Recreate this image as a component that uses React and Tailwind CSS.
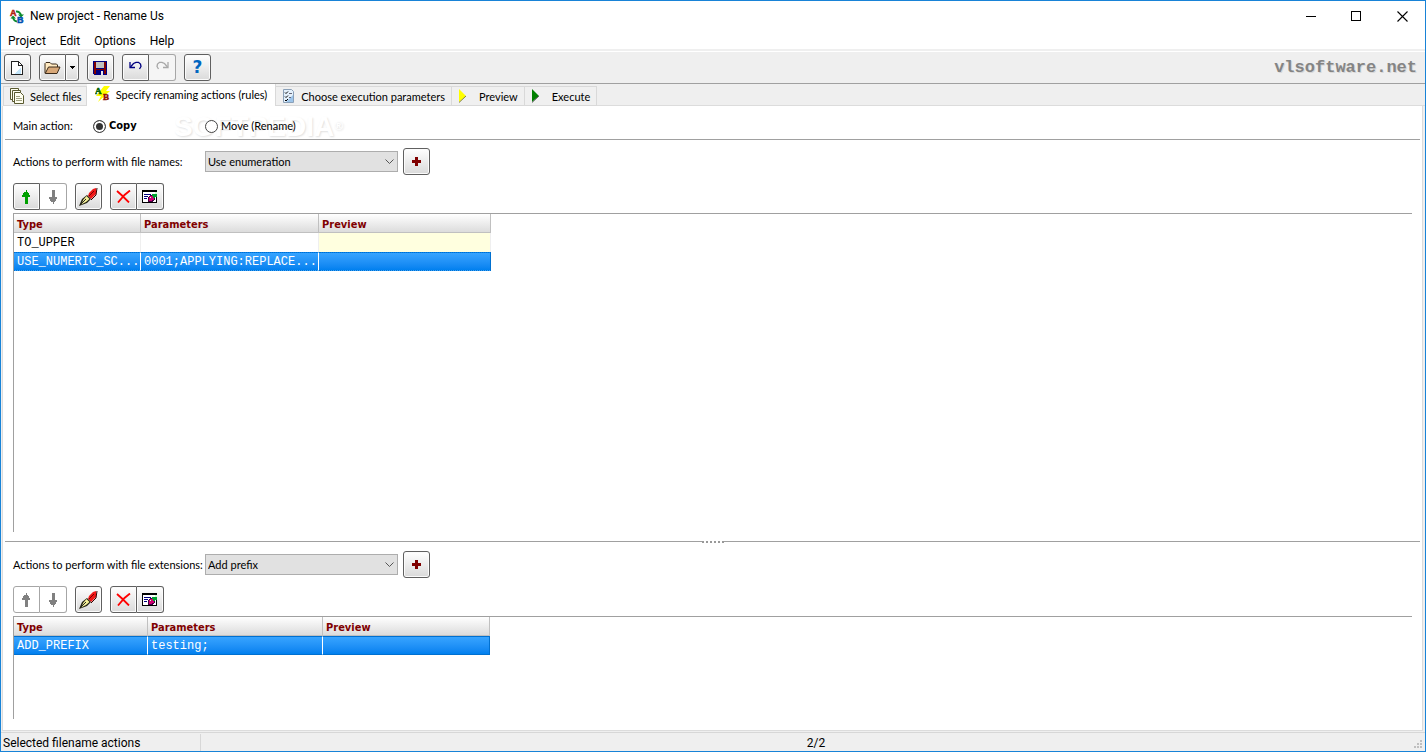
import { useState } from "react";
import clsx from "clsx";

const TAHOMA = "font-[Lato,'Noto_Sans',sans-serif] text-[11px]";
const TAHOMA_BOLD = "font-['DejaVu_Sans_Condensed','DejaVu_Sans',sans-serif] text-[11px] font-bold";
const SEGOE = "font-[Roboto,'Noto_Sans',sans-serif] text-[12px]";
const MONO = "font-['Liberation_Mono','Courier_New',monospace]";

const fileNameRules = [
  { type: "TO_UPPER", params: "", preview: "" },
  { type: "USE_NUMERIC_SC...", params: "0001;APPLYING:REPLACE...", preview: "" },
];

const extensionRules = [{ type: "ADD_PREFIX", params: "testing;", preview: "" }];

const tabs = [
  { id: "files", label: "Select files", icon: FilesIcon, width: "gap-[6px] pl-[6px] pr-[4px]" },
  { id: "rules", label: "Specify renaming actions (rules)", icon: RulesIcon, width: "gap-[6px] px-[8px]" },
  { id: "params", label: "Choose execution parameters", icon: ChecklistIcon, width: "gap-[6px] px-[6px]" },
  { id: "preview", label: "Preview", icon: YellowArrow, width: "gap-[12px] px-[6px]" },
  { id: "execute", label: "Execute", icon: GreenArrow, width: "gap-[12px] pl-[6px] pr-[6px]" },
];

export default function App() {
  const [tab, setTab] = useState("rules");
  const [action, setAction] = useState("copy");

  return (
    <div className="flex h-screen flex-col border border-[#1883d7] bg-[#efefef] text-black">
      <TitleBar />
      <MenuBar />
      <Toolbar />

      <nav role="tablist" className={clsx(TAHOMA, "z-10 flex h-[22px] items-end pl-[2px]")}>
        {tabs.map(({ id, label, icon: Icon, width }) => (
          <button
            key={id}
            role="tab"
            aria-selected={tab === id}
            onClick={() => setTab(id)}
            className={clsx(
              "flex items-center whitespace-nowrap border-r border-[#d9d9d9]",
              width,
              tab === id ? "h-[22px] bg-white pb-[2px]" : "h-[20px] border-y bg-[#f0f0f0]",
              id === "files" && "border-l"
            )}
          >
            <Icon />
            <span className="pt-[2px]">{label}</span>
          </button>
        ))}
        <div className="flex-1 border-b border-[#dcdcdc]" />
      </nav>

      <main className="mb-px ml-px mr-[2px] flex min-h-0 flex-1 flex-col border-x border-b border-[#dcdcdc] bg-white px-[2px]">
        <div
          role="radiogroup"
          aria-label="Main action"
          className={clsx(TAHOMA, "relative flex h-[34px] shrink-0 items-center border-b border-[#a0a0a0] pt-[8px] pl-[8px]")}
        >
          <span
            aria-hidden="true"
            className="absolute left-[169px] top-[6px] font-['Liberation_Sans',sans-serif] text-[28px] leading-[30px] font-bold text-white [text-shadow:1px_1px_2px_#e0e0e0]"
          >
            SOFTPEDIA<sup className="text-[12px]">®</sup>
          </span>
          <span className="w-[80px]">Main action:</span>
          <Radio name="action" checked={action === "copy"} onChange={() => setAction("copy")} className="w-[112px]">
            <b className={TAHOMA_BOLD}>Copy</b>
          </Radio>
          <Radio name="action" checked={action === "move"} onChange={() => setAction("move")}>
            Move (Rename)
          </Radio>
        </div>

        <section className="flex min-h-0 flex-1 flex-col px-[8px] pt-[8px] pb-[9px]">
          <RuleHeader
            id="name-rule"
            label="Actions to perform with file names:"
            options={["Use enumeration", "To upper case", "Add prefix"]}
          />
          <RuleButtons canMoveUp />
          <RuleTable rules={fileNameRules} selected={1} focused cols={["w-[127px]", "w-[178px]", "w-[172px]"]} />
        </section>

        <div className="flex h-px items-center justify-center bg-[#a0a0a0]">
          <span className="h-[3px] w-[22px] border-b-2 border-dotted border-[#999] bg-white" />
        </div>

        <section className="flex h-[188px] shrink-0 flex-col px-[8px] pt-[9px] pb-[11px]">
          <RuleHeader
            id="ext-rule"
            label="Actions to perform with file extensions:"
            options={["Add prefix", "Use enumeration"]}
          />
          <RuleButtons />
          <RuleTable rules={extensionRules} selected={0} cols={["w-[134px]", "w-[175px]", "w-[167px]"]} />
        </section>
      </main>

      <footer className={clsx(SEGOE, "relative flex h-[19px] shrink-0 items-center border-t border-[#d7d7d7]")}>
        <span className="h-[17px] w-[200px] border-r border-[#d7d7d7] pl-[2px] leading-[18px]">
          Selected filename actions
        </span>
        <span className="h-[17px] flex-1 pl-[6px] text-center leading-[18px]">2/2</span>
        <svg width="9" height="9" className="absolute right-[2px] bottom-[2px]" fill="#bfbfbf">
          <path d="M6 0h2v2h-2zM3 3h2v2h-2zM6 3h2v2h-2zM0 6h2v2h-2zM3 6h2v2h-2zM6 6h2v2h-2z" />
        </svg>
      </footer>
    </div>
  );
}

function TitleBar() {
  return (
    <header className={clsx(SEGOE, "flex h-[30px] shrink-0 items-center bg-white pl-[8px]")}>
      <AppIcon />
      <h1 className="ml-[5px] flex-1">New project - Rename Us</h1>
      <button aria-label="Minimize" className="grid h-full w-[45px] place-items-center">
        <svg width="10" height="10" stroke="#000" shapeRendering="crispEdges">
          <path d="M0 5.5h10" />
        </svg>
      </button>
      <button aria-label="Maximize" className="grid h-full w-[46px] place-items-center">
        <svg width="10" height="10" fill="none" stroke="#000" shapeRendering="crispEdges">
          <path d="M.5.5h9v9h-9z" />
        </svg>
      </button>
      <button aria-label="Close" className="grid h-full w-[46px] place-items-center">
        <svg width="11" height="11" stroke="#000" strokeWidth="1.1">
          <path d="M.5.5l10 10M10.5.5l-10 10" />
        </svg>
      </button>
    </header>
  );
}

function MenuBar() {
  return (
    <nav className={clsx(SEGOE, "flex h-[18px] shrink-0 items-center gap-[14px] bg-white pt-[2px] pl-[7px]")}>
      <button>Project</button>
      <button>Edit</button>
      <button>Options</button>
      <button>Help</button>
    </nav>
  );
}

function Toolbar() {
  return (
    <div className="mt-[2px] flex h-[33px] shrink-0 items-start gap-[8px] border-t border-b border-t-white border-b-[#a0a0a0] pt-[2px] pr-[8px] pl-[3px]">
      <ToolButton label="New project">
        <NewIcon />
      </ToolButton>
      <div className="flex">
        <ToolButton label="Open project" side="left">
          <FolderIcon />
        </ToolButton>
        <ToolButton label="Recent projects" side="right" narrow>
          <svg width="5" height="3" shapeRendering="crispEdges">
            <path d="M0 0h5v1h-1v1h-1v1h-1v-1h-1v-1h-1z" />
          </svg>
        </ToolButton>
      </div>
      <ToolButton label="Save project">
        <SaveIcon />
      </ToolButton>
      <div className="flex">
        <ToolButton label="Undo" side="left">
          <UndoIcon color="#000080" />
        </ToolButton>
        <ToolButton label="Redo" side="right" disabled>
          <UndoIcon color="#a8a8a8" flip />
        </ToolButton>
      </div>
      <ToolButton label="Help">
        <span className="font-['DejaVu_Sans',sans-serif] text-[17px] leading-none font-bold text-[#0066c0]">?</span>
      </ToolButton>
      <a
        href="#vlsoftware"
        className={clsx(
          MONO,
          "mt-[4px] ml-auto text-[17px] leading-[20px] font-bold text-[#848484] [text-shadow:1px_1px_0_#d8d8d8]"
        )}
      >
        vlsoftware.net
      </a>
    </div>
  );
}

function ToolButton({ label, side, narrow, disabled, children }) {
  return (
    <button
      aria-label={label}
      disabled={disabled}
      className={clsx(
        "grid h-[27px] shrink-0 place-items-center border",
        narrow ? "w-[13px]" : "w-[27px]",
        side === "left" && "rounded-l-[3px]",
        side === "right" && "rounded-r-[3px] border-l-0",
        !side && "rounded-[3px]",
        disabled
          ? "border-[#a6a6a6] bg-white/40"
          : "border-[#606060] bg-linear-to-b from-white to-[#dadada] shadow-[inset_0_0_0_1px_#fbfbfb]"
      )}
    >
      {children}
    </button>
  );
}

function Radio({ className, children, ...props }) {
  return (
    <label className={clsx("relative flex items-center gap-[3px]", className)}>
      <input
        type="radio"
        className="size-[13px] appearance-none rounded-full border border-[#444] bg-white checked:bg-[#333] checked:shadow-[inset_0_0_0_2px_#fff]"
        {...props}
      />
      {children}
    </label>
  );
}

function RuleHeader({ id, label, options }) {
  return (
    <div className={clsx(TAHOMA, "flex items-center")}>
      <label htmlFor={id} className="w-[192px] pt-[2px] whitespace-nowrap">
        {label}
      </label>
      <div className="relative mr-[5px]">
        <select
          id={id}
          className="block h-[21px] w-[193px] appearance-none border border-[#adadad] bg-[#e1e1e1] pt-[2px] pl-[2px]"
        >
          {options.map((o) => (
            <option key={o}>{o}</option>
          ))}
        </select>
        <svg
          width="9"
          height="6"
          fill="none"
          stroke="#555"
          className="pointer-events-none absolute top-[8px] right-[4px]"
        >
          <path d="M.5.5l4 4 4-4" />
        </svg>
      </div>
      <ToolButton label="Add action">
        <svg width="9" height="9" fill="#800000" shapeRendering="crispEdges">
          <path d="M3 0h3v3h3v3h-3v3h-3v-3h-3v-3h3z" />
        </svg>
      </ToolButton>
    </div>
  );
}

function RuleButtons({ canMoveUp }) {
  return (
    <div className="mt-[8px] flex gap-[8px]">
      <div className="flex">
        <ToolButton label="Move up" side="left" disabled={!canMoveUp}>
          <ArrowIcon color={canMoveUp ? "#00a000" : "#808080"} />
        </ToolButton>
        <ToolButton label="Move down" side="right" disabled>
          <ArrowIcon color="#808080" down />
        </ToolButton>
      </div>
      <ToolButton label="Edit action">
        <PenIcon />
      </ToolButton>
      <div className="flex">
        <ToolButton label="Delete action" side="left">
          <svg width="15" height="13" fill="none" stroke="#f00" strokeWidth="1.8">
            <path d="M1 1l5 4.500 7 7M14 .5L8.500 5 2 12.500" />
          </svg>
        </ToolButton>
        <ToolButton label="Clear actions" side="right">
          <ClearIcon />
        </ToolButton>
      </div>
    </div>
  );
}

function RuleTable({ rules, selected, focused, cols }) {
  return (
    <div className="mt-[3px] min-h-0 flex-1 border-t border-l border-[#a0a0a0]">
      <table className="table-fixed border-separate border-spacing-0 text-left">
        <thead className={clsx(TAHOMA_BOLD, "leading-[15px] text-[#800000]")}>
          <tr>
            {["Type", "Parameters", "Preview"].map((h, i) => (
              <th
                key={h}
                className={clsx(
                  cols[i],
                  "h-[19px] border-r border-b border-[#c0c0c0] bg-linear-to-b from-white to-[#dcdcdc] pt-[3px] pb-0 pl-[3px]"
                )}
              >
                {h}
              </th>
            ))}
          </tr>
        </thead>
        <tbody className={clsx(MONO, "text-[12px] leading-[15px]")}>
          {rules.map((r, i) => (
            <tr key={r.type} className={clsx(i === selected && "text-white")}>
              {[r.type, r.params, r.preview].map((text, c) => (
                <td
                  key={c}
                  className={clsx(
                    "h-[19px] border-r pt-[2px] pb-0 pl-[3px] whitespace-nowrap",
                    i === selected
                      ? "border-y border-y-[#0070d0] border-r-white bg-linear-to-b from-[#37a4ff] to-[#0080ef] last:border-r-[#0070d0]"
                      : "border-r-[#efefef] last:bg-[#ffffdf]",
                    i === selected && focused && "border-y-[#1c6a6a] [border-top-style:dotted] [border-bottom-style:dotted]"
                  )}
                >
                  {text}
                </td>
              ))}
            </tr>
          ))}
        </tbody>
      </table>
    </div>
  );
}

function AppIcon() {
  return (
    <svg width="16" height="16" fontFamily="Liberation Sans" fontWeight="bold">
      <path d="M7 3.500a4.500 4.500 0 0 1 5 4M4 9a5 5 0 0 0 4 4.500" fill="none" stroke="#0a8a2a" strokeWidth="2" />
      <path d="M9 6.500h6l-3 3zM1.500 10.500h5.500l-3-3z" fill="#0a8a2a" />
      <text x="1" y="8" fontSize="9" fill="#b02010" stroke="#b02010" strokeWidth=".5">A</text>
      <text x="8" y="15" fontSize="9" fill="#0050b0" stroke="#0050b0" strokeWidth=".5">B</text>
    </svg>
  );
}

function NewIcon() {
  return (
    <svg width="12" height="14" className="-translate-x-px" shapeRendering="crispEdges">
      <path d="M1 1h6l4 4v8H1z" fill="#fff" />
      <path d="M10 6v7H3z" fill="#c4e6fa" />
      <path d="M.5.5h7l4 4v9H.5zM7.5.5v4h4" fill="none" stroke="#222" />
    </svg>
  );
}

function FolderIcon() {
  return (
    <svg width="17" height="14">
      <path d="M1 12V2.500l1-1h4l1.500 1.500h5l1 1v2" fill="#ffe9c0" stroke="#3a2a1a" />
      <path d="M1.200 12.500L4.500 6h11.500l-3 6.500z" fill="#d8a878" stroke="#3a2a1a" strokeLinejoin="round" />
    </svg>
  );
}

function SaveIcon() {
  return (
    <svg width="14" height="14" className="-translate-x-px" shapeRendering="crispEdges">
      <path d="M0 0h14v14H1l-1-1z" fill="#000080" />
      <path d="M1 1h2v7h8V1h2v12H1z" fill="#800000" />
      <path d="M3 1h8v6H3z" fill="#c0c0c0" />
      <path d="M3 9h8v5H3z" fill="#000080" />
      <path d="M8 10h2v4H8z" fill="#e8e8e8" />
    </svg>
  );
}

function UndoIcon({ color, flip }) {
  return (
    <svg width="13" height="9" className={clsx("-mt-1", flip && "-scale-x-100")} fill="none" stroke={color}>
      <path d="M1 1v5.500h5" strokeWidth="1.300" />
      <path d="M1.500 6l3-3.500 2.500-1.200h2.500l2 1.700.5 2.500-1.500 2.500" strokeWidth="1.300" />
    </svg>
  );
}

function FilesIcon() {
  return (
    <svg width="14" height="16" fill="#fffff0" stroke="#5a5a30">
      <path d="M.5.5h8v11h-8z" />
      <path d="M2.500 2.500h8v11h-8z" />
      <path d="M4.500 4.500h6l3 3v8h-9z" />
      <path d="M6 8.500h4M6 10.500h6M6 12.500h6" stroke="#a0a080" />
    </svg>
  );
}

function RulesIcon() {
  return (
    <svg width="15" height="16" fontFamily="Liberation Serif" fontWeight="bold">
      <path d="M9 0h6l-4 5h4L3 16l3-6H1z" fill="#ffff00" />
      <text x="0" y="8" fontSize="9" fill="#006400" stroke="#006400" strokeWidth=".5">A</text>
      <text x="8" y="14" fontSize="9" fill="#901000" stroke="#901000" strokeWidth=".5">B</text>
    </svg>
  );
}

function ChecklistIcon() {
  return (
    <svg width="13" height="14">
      <path d="M1.500.5h8l2 2v11h-10z" fill="#e4f1fc" stroke="#8aa0b8" />
      <path d="M11 6v7H4z" fill="#9cc4ea" />
      <path d="M3 3.500l1 1 2-2M3 7.500l1 1 2-2M3 11l1 1 2-2" fill="none" stroke="#000" />
      <path d="M7 4.500h3M7 8.500h2" stroke="#667" />
    </svg>
  );
}

function YellowArrow() {
  return (
    <svg width="9" height="14">
      <path d="M1 0l7 7-7 6z" fill="#ffff00" />
      <path d="M8 7l-7 6.500" stroke="#808040" />
    </svg>
  );
}

function GreenArrow() {
  return (
    <svg width="9" height="14">
      <path d="M1 0l7 7-7 6z" fill="#008000" />
      <path d="M8 7l-7 6.500" stroke="#606060" />
    </svg>
  );
}

function ArrowIcon({ color, down }) {
  return (
    <svg width="9" height="14" fill={color} className={clsx(down && "-scale-y-100")} shapeRendering="crispEdges">
      <path d="M4 0h1v2h1v1h1v2h1v2h-2v7h-3v-7h-3v-2h1v-2h1v-1h2z" />
    </svg>
  );
}

function PenIcon() {
  return (
    <svg width="19" height="19">
      <path d="M17 1v6l-5 5-3-3 1-3 4-4z" fill="#f01818" />
      <path d="M18 1l-1 7-5 5" stroke="#300" fill="none" />
      <path d="M15 4l-5 5" stroke="#700" />
      <path d="M8 8l4 4-4 4-8 3 3-7z" fill="#202010" />
      <path d="M7.500 9l3 3-3.500 3-5 2.500 2.500-5z" fill="#f4f098" />
      <path d="M2 17l5-5" stroke="#222" />
    </svg>
  );
}

function ClearIcon() {
  return (
    <svg width="16" height="15" shapeRendering="crispEdges">
      <path d="M.5 1.500h14v12H.5z" fill="#fff" stroke="#000" />
      <path d="M0 1h15v2H0z" />
      <path d="M2 5.500h7M2 7.500h4M2 9.500h3" stroke="#000080" />
      <path d="M9 6h3v5l-3 2-3-1V9z" fill="#d00070" stroke="#400040" />
      <path d="M10 5h5v3h-2v1h-2z" fill="#00a030" />
      <path d="M13 3h2v2h-2zM8 8h1v1H8z" fill="#d0ffd0" />
    </svg>
  );
}
